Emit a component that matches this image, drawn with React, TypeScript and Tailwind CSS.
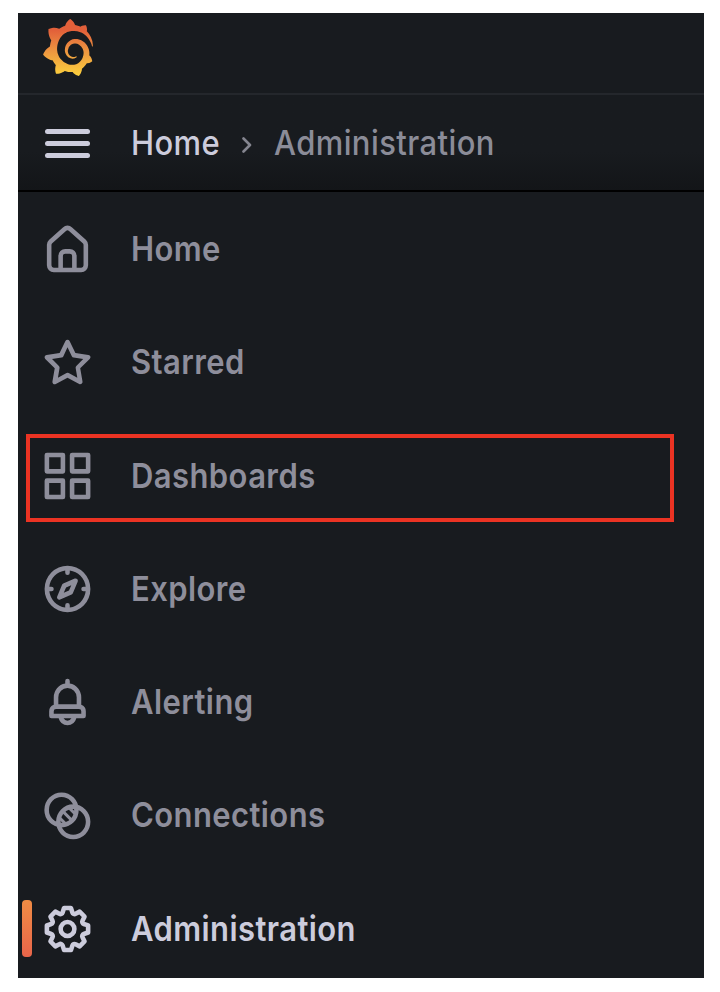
import { SiGrafana } from "react-icons/si";

const paths = {
  home: "M20,8h0L14,2.74a3,3,0,0,0-4,0L4,8a3,3,0,0,0-1,2.26V19a3,3,0,0,0,3,3H18a3,3,0,0,0,3-3V10.25A3,3,0,0,0,20,8ZM14,20H10V15a1,1,0,0,1,1-1h2a1,1,0,0,1,1,1Zm5-1a1,1,0,0,1-1,1H16V15a3,3,0,0,0-3-3H11a3,3,0,0,0-3,3v5H6a1,1,0,0,1-1-1V10.25a1,1,0,0,1,.34-.75l6-5.25a1,1,0,0,1,1.32,0l6,5.25a1,1,0,0,1,.34.75Z",
  star: "M22,9.67A1,1,0,0,0,21.14,9l-5.69-.83L12.9,3a1,1,0,0,0-1.8,0L8.55,8.16,2.86,9a1,1,0,0,0-.81.68,1,1,0,0,0,.25,1l4.13,4-1,5.68A1,1,0,0,0,6.9,21.44L12,18.77l5.1,2.67a.93.93,0,0,0,.46.12,1,1,0,0,0,.59-.19,1,1,0,0,0,.4-1l-1-5.68,4.13-4A1,1,0,0,0,22,9.67Zm-6.15,4a1,1,0,0,0-.29.88l.72,4.2-3.76-2a1.06,1.06,0,0,0-.94,0l-3.76,2,.72-4.2a1,1,0,0,0-.29-.88l-3-3,4.21-.61a1,1,0,0,0,.76-.55L12,5.7l1.88,3.82a1,1,0,0,0,.76.55l4.21.61Z",
  apps: "M10,13H3a1,1,0,0,0-1,1v7a1,1,0,0,0,1,1h7a1,1,0,0,0,1-1V14A1,1,0,0,0,10,13ZM9,20H4V15H9ZM21,2H14a1,1,0,0,0-1,1v7a1,1,0,0,0,1,1h7a1,1,0,0,0,1-1V3A1,1,0,0,0,21,2ZM20,9H15V4h5Zm1,4H14a1,1,0,0,0-1,1v7a1,1,0,0,0,1,1h7a1,1,0,0,0,1-1V14A1,1,0,0,0,21,13Zm-1,7H15V15h5ZM10,2H3A1,1,0,0,0,2,3v7a1,1,0,0,0,1,1h7a1,1,0,0,0,1-1V3A1,1,0,0,0,10,2ZM9,9H4V4H9Z",
  compass: "M12,2A10,10,0,1,0,22,12,10,10,0,0,0,12,2Zm1,17.93V19a1,1,0,0,0-2,0v.93A8,8,0,0,1,4.07,13H5a1,1,0,0,0,0-2H4.07A8,8,0,0,1,11,4.07V5a1,1,0,0,0,2,0V4.07A8,8,0,0,1,19.93,11H19a1,1,0,0,0,0,2h.93A8,8,0,0,1,13,19.93ZM15.14,7.55l-5,2.12a1,1,0,0,0-.52.52l-2.12,5a1,1,0,0,0,.21,1.1,1,1,0,0,0,.7.29.93.93,0,0,0,.4-.09l5-2.12a1,1,0,0,0,.52-.52l2.12-5a1,1,0,0,0-1.31-1.3Zm-2.49,5.1-2.28,1,1-2.28,2.28-1Z",
  bell: "M18,13.18V10a6,6,0,0,0-5-5.91V3a1,1,0,0,0-2,0V4.09A6,6,0,0,0,6,10v3.18A3,3,0,0,0,4,16v2a1,1,0,0,0,1,1H8.14a4,4,0,0,0,7.72,0H19a1,1,0,0,0,1-1V16A3,3,0,0,0,18,13.18ZM8,10a4,4,0,0,1,8,0v3H8Zm4,10a2,2,0,0,1-1.72-1h3.44A2,2,0,0,1,12,20Zm6-3H6V16a1,1,0,0,1,1-1H17a1,1,0,0,1,1,1Z",
  cog: "M21.32,9.55l-1.89-.63.89-1.78A1,1,0,0,0,20.13,6L18,3.87a1,1,0,0,0-1.15-.19l-1.78.89-.63-1.89A1,1,0,0,0,13.5,2h-3a1,1,0,0,0-.95.68L8.92,4.57,7.14,3.68A1,1,0,0,0,6,3.87L3.87,6a1,1,0,0,0-.19,1.15l.89,1.78-1.89.63A1,1,0,0,0,2,10.5v3a1,1,0,0,0,.68.95l1.89.63-.89,1.78A1,1,0,0,0,3.87,18L6,20.13a1,1,0,0,0,1.15.19l1.78-.89.63,1.89a1,1,0,0,0,.95.68h3a1,1,0,0,0,.95-.68l.63-1.89,1.78.89A1,1,0,0,0,18,20.13L20.13,18a1,1,0,0,0,.19-1.15l-.89-1.78,1.89-.63A1,1,0,0,0,22,13.5v-3A1,1,0,0,0,21.32,9.55ZM20,12.78l-1.2.4A2,2,0,0,0,17.64,16l.57,1.14-1.1,1.1L16,17.64a2,2,0,0,0-2.79,1.16l-.4,1.2H11.22l-.4-1.2A2,2,0,0,0,8,17.64l-1.14.57-1.1-1.1L6.36,16A2,2,0,0,0,5.2,13.18L4,12.78V11.22l1.2-.4A2,2,0,0,0,6.36,8L5.79,6.89l1.1-1.1L8,6.36A2,2,0,0,0,10.82,5.2l.4-1.2h1.56l.4,1.2A2,2,0,0,0,16,6.36l1.14-.57,1.1,1.1L17.64,8a2,2,0,0,0,1.16,2.79l1.2.4ZM12,8a4,4,0,1,0,4,4A4,4,0,0,0,12,8Zm0,6a2,2,0,1,1,2-2A2,2,0,0,1,12,14Z",
};

type IconName = keyof typeof paths | "connections";

function Icon({ name }: { name: IconName }) {
  return (
    <svg viewBox="0 0 24 24" preserveAspectRatio="none" fill="currentColor" className="mt-px h-[56px] w-[55px] shrink-0">
      {name === "connections" ? (
        <g fill="none" stroke="currentColor" strokeWidth="2">
          <circle cx="9.4" cy="9.4" r="6.5" />
          <circle cx="14.5" cy="14.5" r="6.5" />
          <path d="M9.8 9.8l4.4 4.4M12.2 8l3.8 3.8M8 12.2l3.8 3.8" strokeWidth="1.3" />
        </g>
      ) : (
        <path d={paths[name]} />
      )}
    </svg>
  );
}

const items: { label: string; icon: IconName; marked?: boolean; active?: boolean }[] = [
  { label: "Home", icon: "home" },
  { label: "Starred", icon: "star" },
  { label: "Dashboards", icon: "apps", marked: true },
  { label: "Explore", icon: "compass" },
  { label: "Alerting", icon: "bell" },
  { label: "Connections", icon: "connections" },
  { label: "Administration", icon: "cog", active: true },
];

export default function App() {
  return (
    <div className="h-[992px] w-[720px] bg-white pt-[13px] pl-[18px] font-['Inter',sans-serif] text-[34.4px] leading-none tracking-[0.014em]">
      <div className="flex h-[965px] w-[686px] flex-col overflow-hidden bg-[#181b1f]">
        <header className="h-[82px] shrink-0 border-b-2 border-[#24272c] pt-[6px] pl-[23px]">
          <svg width="0" height="0" className="absolute">
            <linearGradient id="flame" x1="0" y1="1" x2="0" y2="0">
              <stop offset="0" stopColor="#fcd13d" />
              <stop offset="0.45" stopColor="#ed9440" />
              <stop offset="0.8" stopColor="#e2603a" />
              <stop offset="1" stopColor="#e2603a" />
            </linearGradient>
          </svg>
          <SiGrafana fill="url(#flame)" preserveAspectRatio="none" className="h-[57px] w-[54px]" />
        </header>
        <div className="flex h-[97px] shrink-0 items-center border-b-2 border-black bg-linear-to-b from-[#181b1f] from-60% to-[#131518] pt-px pl-[27px] text-[#ccccdc]">
          <div className="flex w-[45px] flex-col gap-[7px]">
            <span className="h-[5px] rounded-full bg-current" />
            <span className="h-[5px] rounded-full bg-current" />
            <span className="h-[5px] rounded-full bg-current" />
          </div>
          <div className="ml-[41px] w-[111px]">
            <span className="inline-block origin-left scale-x-90 font-[450]">Home</span>
          </div>
          <svg viewBox="0 0 10 16" className="mt-[4px] h-[16px] w-[10px] fill-none stroke-[#84858f] stroke-[2.6]">
            <path d="M1.5 1.5l6.5 6.5-6.5 6.5" strokeLinecap="round" strokeLinejoin="round" />
          </svg>
          <span className="ml-[22px] inline-block origin-left scale-x-90 font-[450] text-[#8b8c98]">Administration</span>
        </div>
        <nav>
          {items.map((item) => (
            <div
              key={item.label}
              className={`relative flex h-[113.3px] items-center pl-[22px] font-[570] ${item.active ? "text-[#ccccdc]" : "text-[#8e8e9b]"}`}
            >
              {item.active && (
                <span className="absolute top-[28px] left-[4px] h-[57px] w-[10px] rounded-[4px] bg-linear-to-b from-[#f08c44] to-[#e8654a]" />
              )}
              {item.marked && (
                <span className="absolute top-[15.4px] left-[8px] h-[88px] w-[648px] border-4 border-[#eb3323]" />
              )}
              <Icon name={item.icon} />
              <span className="mt-px ml-[36px] inline-block origin-left scale-x-90">{item.label}</span>
            </div>
          ))}
        </nav>
      </div>
    </div>
  );
}
